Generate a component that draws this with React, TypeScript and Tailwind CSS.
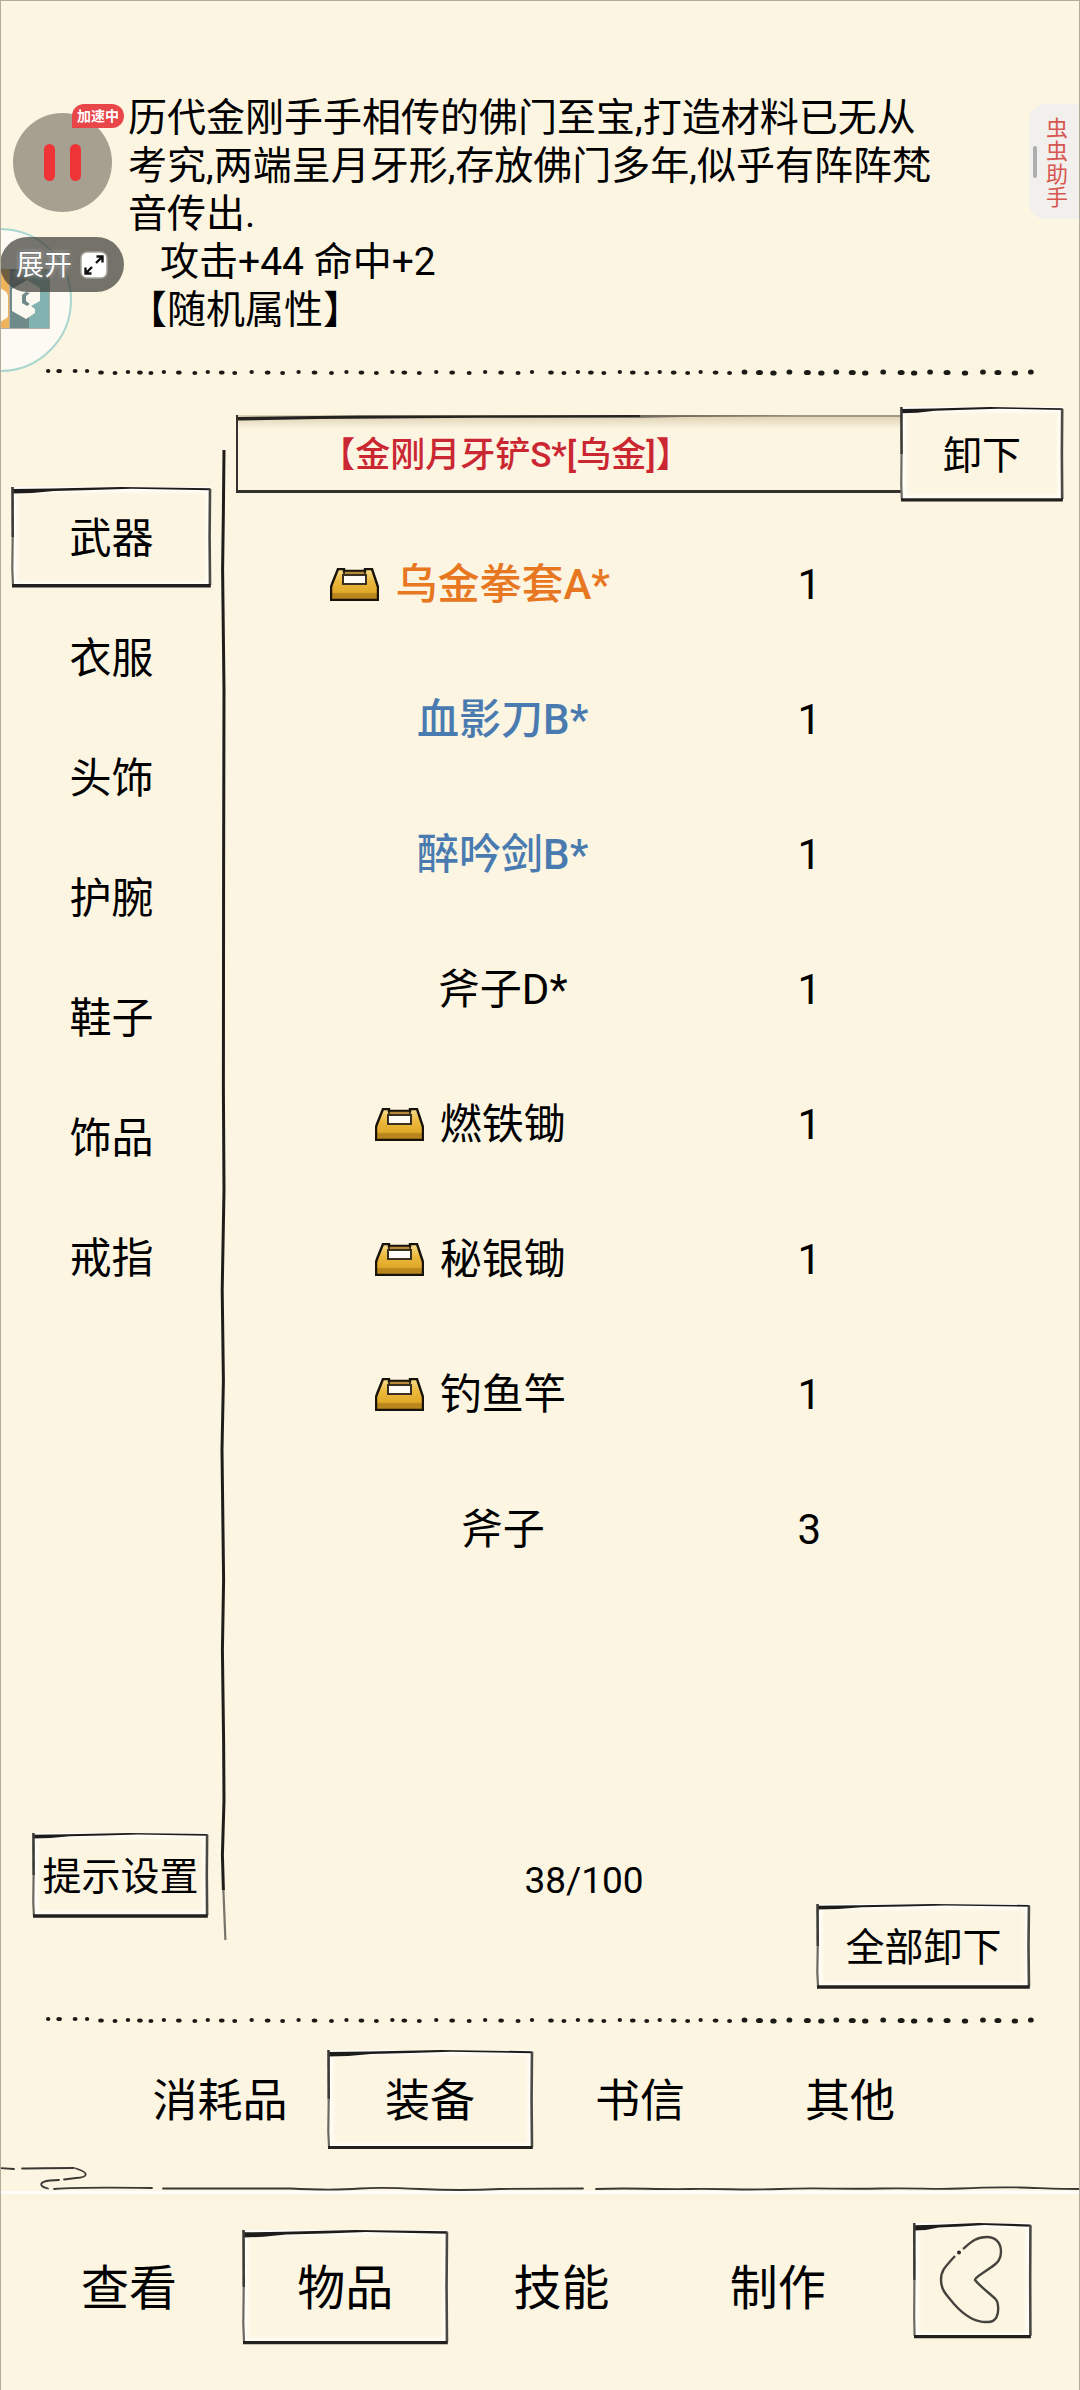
import { useState } from "react"
import type React from "react"
import clsx from "clsx"

const categories = ["武器", "衣服", "头饰", "护腕", "鞋子", "饰品", "戒指"]

const bagTabs = ["消耗品", "装备", "书信", "其他"]

const mainTabs = ["查看", "物品", "技能", "制作"]

const items = [
  { name: "乌金拳套A*", count: 1, tone: "font-medium text-[#e87722]", locked: true },
  { name: "血影刀B*", count: 1, tone: "font-medium text-[#4a7bb0]", locked: false },
  { name: "醉吟剑B*", count: 1, tone: "font-medium text-[#4a7bb0]", locked: false },
  { name: "斧子D*", count: 1, tone: "text-black", locked: false },
  { name: "燃铁锄", count: 1, tone: "text-black", locked: true },
  { name: "秘银锄", count: 1, tone: "text-black", locked: true },
  { name: "钓鱼竿", count: 1, tone: "text-black", locked: true },
  { name: "斧子", count: 3, tone: "text-black", locked: false },
]

const dots = [
  47, 58, 74, 86, 100, 114, 127, 139, 150, 163, 178, 194, 207, 221, 234, 251, 267, 282, 298, 314, 331, 346,
  361, 376, 392, 404, 419, 436, 452, 469, 485, 501, 518, 532, 551, 564, 578, 591, 604, 620, 633, 647, 660,
  674, 688, 701, 716, 730, 745, 760, 774, 790, 808, 822, 837, 853, 866, 884, 902, 915, 931, 948, 966, 984,
  999, 1016, 1032,
]

const DottedLine: React.FC = () => (
  <svg viewBox="0 0 1080 20" className="block w-full shrink-0" aria-hidden="true">
    {dots.map((x, i) => (
      <ellipse
        key={x}
        cx={x}
        cy={i < 4 ? 9 : 10 + ((i * 7) % 3) * 0.5}
        rx={(x > 740 ? 2.9 : 2.2) + ((i * 5) % 3) * 0.3}
        ry={x > 740 ? 2.6 : 2.1}
        fill="#1c1a16"
      />
    ))}
  </svg>
)

// hand drawn frame, stretched over whatever it sits in
const InkFrame: React.FC = () => (
  <svg
    viewBox="0 0 200 100"
    preserveAspectRatio="none"
    className="pointer-events-none absolute inset-0 h-full w-full overflow-visible"
    aria-hidden="true"
  >
    <path d="M0 2 L40 1.6 L110 0 L199.500 1.2 L199.500 3.2 L120 1.8 L80 3 L42 4 L20 6 L0 6.6 Z" fill="#1d1c1a" />
    <g fill="none">
      <path d="M0.500 0 L0.700 50" stroke="#3b3a36" strokeWidth="2.6" vectorEffect="non-scaling-stroke" />
      <path d="M0.700 50 L0.300 82 L1 98" stroke="#6b6961" strokeWidth="2.2" vectorEffect="non-scaling-stroke" />
      <path d="M199 2 L198.6 50 L199 98" stroke="#4b4944" strokeWidth="2.6" vectorEffect="non-scaling-stroke" />
      <path d="M0 98.8 L199.8 98.8" stroke="#22211f" strokeWidth="3.4" vectorEffect="non-scaling-stroke" />
    </g>
  </svg>
)

type InkButtonProps = {
  children: React.ReactNode
  framed?: boolean
  className?: string
  onClick?: () => void
  label?: string
}

const InkButton: React.FC<InkButtonProps> = ({ children, framed = true, className, onClick, label }) => (
  <button
    type="button"
    aria-label={label}
    onClick={onClick}
    className={clsx(
      "relative flex cursor-pointer items-center justify-center whitespace-nowrap",
      framed && "shadow-[inset_0_0_4px_5px_#fffefa]",
      className
    )}
  >
    {framed && <InkFrame />}
    {children}
  </button>
)

const LockIcon: React.FC = () => (
  <svg width="49" height="33" viewBox="0 0 49 33" aria-label="已锁定" role="img">
    <defs>
      <linearGradient id="gold" x1="0" y1="0" x2="0" y2="1">
        <stop offset="0" stopColor="#f8dd90" />
        <stop offset="0.4" stopColor="#ecb83c" />
        <stop offset="0.75" stopColor="#e0a928" />
        <stop offset="0.8" stopColor="#b8861c" />
        <stop offset="1" stopColor="#b8861c" />
      </linearGradient>
    </defs>
    <path d="M8 1 H14 V3 H35 V1 H42 L47 16 L48 19 V32 H1 V19 L2 16 Z" fill="url(#gold)" stroke="#17130a" strokeWidth="2.4" />
    <path d="M14 3 H35 V7 H14 Z" fill="#b78a3a" stroke="#17130a" strokeWidth="1.5" />
    <path d="M13 7 H36 V16 H13 Z" fill="#fffdf5" stroke="#3a3020" strokeWidth="2" />
  </svg>
)

const VerticalRule: React.FC = () => (
  <svg
    viewBox="0 0 8 1490"
    preserveAspectRatio="none"
    className="mt-[68px] mb-[70px] w-2 shrink-0 self-stretch"
    aria-hidden="true"
  >
    <path
      d="M5 0 L4.4 60 L3.6 120 L5 240 L4.6 420 L4.4 640 L5 740 L3.2 840 L4.4 930 L3 1000 L4.6 1130 L3.4 1200 L4.6 1290 L5 1350 L3.4 1405 L4.4 1440"
      fill="none"
      stroke="#1f1e1b"
      strokeWidth="3"
    />
    <path d="M4.4 1440 L6.4 1490" fill="none" stroke="#77746a" strokeWidth="2.2" />
  </svg>
)

const CloudLine: React.FC = () => (
  <svg viewBox="0 0 1080 30" className="block w-full" aria-hidden="true">
    <rect x="0" y="27" width="1080" height="3" fill="#fffefb" />
    <g fill="none" stroke="#3a3832" strokeWidth="1.8" strokeLinecap="round">
      <path d="M0 4 L14 5" />
      <path d="M22 4.5 C40 4 62 4 74 4" />
      <path d="M76 4.5 C90 9 88 13 76 14 L64 15.5" />
      <path d="M59 16 C44 16 39 19 42 22 C43 23 46 24 48 24.5" />
      <path d="M54 25 C80 23 120 23.5 152 24" />
      <path d="M163 24.5 L290 24.5 C320 26 340 26 360 24.5 S400 24 420 25 S480 26 500 25 L583 24.5" />
      <path d="M596 25 C630 23.5 650 25.5 690 25 S740 26.5 780 25 S840 25.5 880 24.5 S930 26 960 24.5 S1000 23 1020 23.5 S1060 25 1080 25" />
    </g>
  </svg>
)

const FloatingTools: React.FC = () => (
  <>
    <svg className="absolute top-[226px] -left-px" width="74" height="146" viewBox="0 0 74 146" aria-hidden="true">
      <circle cx="0" cy="73" r="71" fill="#fcfaf3" stroke="#a9d6cf" strokeWidth="2" />
      <rect x="0" y="42" width="50" height="60" fill="#b4aea3" />
      <rect x="0" y="42" width="9" height="59" fill="#efb35c" />
      <path d="M0 61 L5 64 Q8 66 8 70 V88 Q8 91 5 92 L0 95 Z" fill="#fdf9ee" />
      <rect x="10" y="42" width="20" height="59" fill="#6f8b89" />
      <rect x="29" y="42" width="20" height="59" fill="#83b3b0" />
      <path
        d="M12 62 L27 53 L40 61 V74 L31 79 L35 82 V86 L26 92 L12 84 Z M22 68 V76 L27 79 L30 77 L26 74 V69 L30 66 L26 65 Z"
        fill="#fbf8ef"
        fillRule="evenodd"
      />
    </svg>

    <button
      type="button"
      aria-label="暂停"
      className="absolute top-28 left-3 flex h-[99px] w-[99px] items-center justify-center gap-[15px] rounded-full bg-[#a7a091]"
    >
      <span className="h-[37px] w-[11px] rounded-full bg-[#ee3437]" />
      <span className="h-[37px] w-[11px] rounded-full bg-[#ee3437]" />
    </button>
    <span className="absolute top-[103px] left-[71px] flex h-6 w-[52px] items-center justify-center rounded-full rounded-bl-[3px] bg-[#e9464a] text-sm font-bold text-white">
      加速中
    </span>

    <button
      type="button"
      className="absolute top-[236px] -left-px flex h-[55px] w-[124px] items-center gap-2 rounded-full bg-[#3c3a36]/70 pl-4 text-[28px] leading-[55px] text-white [text-shadow:0_0_2px_#444,0_0_4px_#ccc]"
    >
      展开
      <svg width="28" height="28" viewBox="0 0 28 28" aria-hidden="true">
        <rect x="1" y="1" width="26" height="26" rx="6" fill="#fff" stroke="#a5a29a" strokeWidth="1.5" />
        <g fill="none" stroke="#111" strokeWidth="2.4">
          <path d="M16 12 L22 6 M16.500 5.500 H22.500 V11.500" />
          <path d="M12 16 L6 22 M5.500 16.500 V22.500 H11.500" />
        </g>
      </svg>
    </button>

    <button
      type="button"
      className="absolute top-[103px] -right-px flex h-[115px] w-[51px] items-center gap-[9px] rounded-l-[16px] bg-[#f1f0ed] pl-1 text-[22px] leading-[23px] text-[#d85650]"
    >
      <span className="h-8 w-1 shrink-0 rounded-full bg-[#aeadb0]" />
      <span className="w-[22px] break-all">虫虫助手</span>
    </button>
  </>
)

export default function App() {
  const [category, setCategory] = useState("武器")
  const [bagTab, setBagTab] = useState("装备")
  const [mainTab, setMainTab] = useState("物品")

  return (
    <div className="relative flex min-h-screen flex-col overflow-hidden border border-[#b3ac9b] bg-[#fcf5e2] font-['Noto_Sans','Noto_Sans_CJK_SC',sans-serif] text-black">
      <header className="pt-[93px] pr-[130px] pl-[127px] font-[Roboto,'Noto_Sans_CJK_SC',sans-serif] text-[39px] leading-[48px]">
        <p>
          历代金刚手手相传的佛门至宝,打造材料已无从
          <br />
          考究,两端呈月牙形,存放佛门多年,似乎有阵阵梵
          <br />
          音传出.
        </p>
        <p className="pl-8">攻击+44 命中+2</p>
        <p>【随机属性】</p>
      </header>

      <div className="mt-[28px]">
        <DottedLine />
      </div>

      <main className="flex flex-1">
        <aside className="flex w-[218px] shrink-0 flex-col pt-[95px]">
          <nav className="flex flex-col text-[42px]">
            {categories.map((name) => (
              <div key={name} className="flex h-[120px] items-center pl-[11px]">
                <InkButton framed={name === category} onClick={() => setCategory(name)} className="h-[100px] w-[199px]">
                  {name}
                </InkButton>
              </div>
            ))}
          </nav>
          <InkButton className="mt-auto mb-[93px] ml-8 h-[84px] w-[175px] text-[39px]">提示设置</InkButton>
        </aside>

        <VerticalRule />

        <section className="flex min-w-0 flex-1 flex-col pl-[9px]">
          <div className="flex items-center pt-[25px] pr-4">
            <div className="relative flex h-[78px] flex-1 items-center justify-center border-b-3 border-l-2 border-[#34322d] pt-2 pr-[128px] font-[Roboto,'Noto_Sans_CJK_SC',sans-serif] text-[35px] leading-normal font-medium text-[#cb2733]">
              <div className="absolute inset-x-0 top-0 h-[14px] bg-linear-to-b from-[#dccfb0] to-transparent" />
              <svg
                viewBox="0 0 660 6"
                preserveAspectRatio="none"
                className="absolute top-0 left-0 h-[6px] w-full"
                aria-hidden="true"
              >
                <path d="M0 2 L120 0.500 L400 0 L560 0.600 L400 2.400 L240 2.800 L80 4 L0 5.500 Z" fill="#25231f" />
                <path d="M400 1 H660" stroke="#8d8673" strokeWidth="1.500" />
              </svg>
              <span>【金刚月牙铲S*[乌金]】</span>
            </div>
            <InkButton className="h-[94px] w-[162px] text-[39px]">卸下</InkButton>
          </div>

          <ul className="mt-4 font-[Roboto,'Noto_Sans_CJK_SC',sans-serif] text-[42px]">
            {items.map((item) => (
              <li key={item.name} className="grid h-[135px] grid-cols-[534fr_80fr_230fr] items-center">
                <button type="button" className="grid cursor-pointer grid-cols-[1fr_auto_1fr] items-center gap-4">
                  <span className="justify-self-end">{item.locked && <LockIcon />}</span>
                  <span className={item.tone}>{item.name}</span>
                </button>
                <span className="text-center">{item.count}</span>
              </li>
            ))}
          </ul>

          <p className="mt-auto pr-[147px] text-center font-[Roboto,sans-serif] text-[37px] leading-[46px]">38/100</p>
          <InkButton className="mr-[49px] mb-[22px] h-[84px] w-[213px] self-end text-[39px]">全部卸下</InkButton>
        </section>
      </main>

      <DottedLine />

      <nav className="mt-5 grid grid-cols-4 justify-items-center pr-[124px] pl-[114px] text-[45px] leading-normal">
        {bagTabs.map((name) => (
          <InkButton key={name} framed={name === bagTab} onClick={() => setBagTab(name)} className="h-[99px] w-[205px]">
            {name}
          </InkButton>
        ))}
      </nav>

      <div className="relative -mx-px bg-[#fcf5e2] pt-[15px]">
        <CloudLine />
      </div>

      <footer className="flex items-start pt-[29px] pr-12 pb-[52px] pl-5">
        <nav className="grid flex-1 grid-cols-4 justify-items-center pt-[7px] text-[48px] leading-normal">
          {mainTabs.map((name) => (
            <InkButton
              key={name}
              framed={name === mainTab}
              onClick={() => setMainTab(name)}
              className="h-[114px] w-[205px]"
            >
              {name}
            </InkButton>
          ))}
        </nav>
        <InkButton label="返回" className="ml-7 h-[115px] w-[117px]">
          <svg width="117" height="115" viewBox="0 0 117 115" aria-hidden="true">
            <path
              d="M41 33 C30 45 27 48 27 57 C27 68 34 73 40 81 C48 90 60 100 74 99 C82 99 85 92 84 83 C84 78 82 76 77 72 C70 66 64 61 61 57 C61 54 68 51 76 45 C84 40 87 36 87 29 C87 18 80 14 73 14 C62 14 57 19 49 26"
              fill="none"
              stroke="#45433d"
              strokeWidth="2.400"
            />
            <circle cx="45" cy="29.500" r="2" fill="#2b2a26" />
          </svg>
        </InkButton>
      </footer>

      <FloatingTools />
    </div>
  )
}
